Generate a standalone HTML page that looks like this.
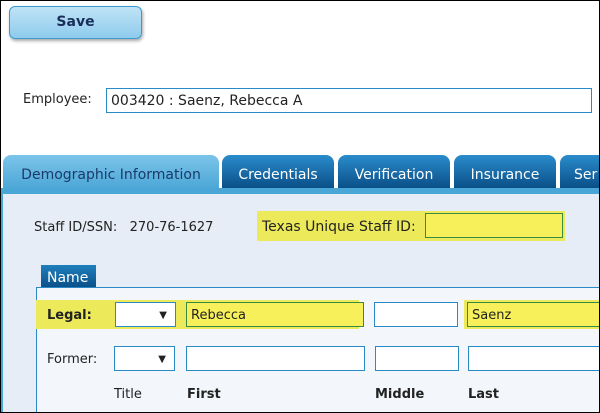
<!DOCTYPE html>
<html><head><style>
*{box-sizing:border-box;margin:0;padding:0}
body{width:600px;height:413px;overflow:hidden;background:#fff;font-family:"DejaVu Sans","Liberation Sans",sans-serif;font-size:13px;color:#222;position:relative}
.frame{position:absolute;left:0;top:0;width:600px;height:413px;border:1px solid #000;pointer-events:none;z-index:10}
.a{position:absolute}
.save{left:9px;top:6px;width:133px;height:33px;border:1px solid #3a9ad0;border-radius:6px;background:linear-gradient(#bfe3f6,#8fcbec);box-shadow:1px 2px 3px rgba(0,0,0,.35);font-weight:bold;color:#1a2e5a;font-size:14px;text-align:center;line-height:31px}
.inp{background:#fff;border:1px solid #2a8ac8}
.y{background:#f7f05a;border:1px solid #3a8a40}
.tab{top:155px;height:33px;border-radius:8px 8px 0 0;background:linear-gradient(#2a8ccc,#0a4f88);color:#fff;font-size:14px;text-align:center;line-height:40px}
.hl{background:#ece95a}
</style></head><body>
<div class="frame"></div>
<div class="a save">Save</div>
<div class="a" style="left:23px;top:92px;font-size:13px">Employee:</div>
<div class="a inp" style="left:106px;top:88px;width:486px;height:25px;padding-left:4px;line-height:25px;font-size:14px">003420 : Saenz, Rebecca A</div>
<div class="a" style="left:1px;top:188px;width:599px;height:6px;background:#4aa6d6"></div>
<div class="a" style="left:1px;top:194px;width:2px;height:219px;background:#4aa6d6"></div>
<div class="a" style="left:3px;top:194px;width:597px;height:219px;background:#e6edf6"></div>
<div class="a tab" style="left:3px;width:216px;height:35px;background:linear-gradient(#7cc4ea,#4aa6d6);color:#1a3a6a">Demographic Information</div>
<div class="a tab" style="left:222px;width:112px">Credentials</div>
<div class="a tab" style="left:338px;width:112px">Verification</div>
<div class="a tab" style="left:454px;width:102px">Insurance</div>
<div class="a tab" style="left:560px;width:60px;text-align:left;padding-left:14px">Ser</div>
<div class="a" style="left:34px;top:220px">Staff ID/SSN:&nbsp;&nbsp; 270-76-1627</div>
<div class="a hl" style="left:257px;top:211px;width:308px;height:30px"></div>
<div class="a" style="left:262px;top:219px;font-size:14px">Texas Unique Staff ID:</div>
<div class="a y" style="left:425px;top:213px;width:138px;height:25px"></div>
<div class="a" style="left:41px;top:265px;width:55px;height:23px;background:linear-gradient(#1e7fbc,#0a4f88);color:#fff;font-size:14px;padding-left:6px;line-height:26px">Name</div>
<div class="a" style="left:36px;top:287px;width:564px;height:126px;background:#f3f6fb;border-left:1px solid #2a8ac8;border-top:1px solid #2a8ac8"></div>
<div class="a hl" style="left:36px;top:300px;width:283px;height:29px"></div>
<div class="a hl" style="left:319px;top:300px;width:40px;height:29px"></div>
<div class="a hl" style="left:464px;top:300px;width:136px;height:29px"></div>
<div class="a" style="left:47px;top:308px;font-weight:bold">Legal:</div>
<div class="a inp" style="left:115px;top:302px;width:61px;height:25px;font-size:10px;text-align:right;padding-right:8px;line-height:25px">▼</div>
<div class="a y" style="left:186px;top:302px;width:178px;height:25px;padding-left:4px;line-height:25px">Rebecca</div>
<div class="a inp" style="left:374px;top:302px;width:84px;height:25px"></div>
<div class="a y" style="left:467px;top:302px;width:140px;height:25px;padding-left:4px;line-height:25px">Saenz</div>
<div class="a" style="left:47px;top:352px">Former:</div>
<div class="a inp" style="left:114px;top:346px;width:61px;height:25px;font-size:10px;text-align:right;padding-right:8px;line-height:25px">▼</div>
<div class="a inp" style="left:186px;top:346px;width:179px;height:25px"></div>
<div class="a inp" style="left:375px;top:346px;width:84px;height:25px"></div>
<div class="a inp" style="left:468px;top:346px;width:140px;height:25px"></div>
<div class="a" style="left:114px;top:387px">Title</div>
<div class="a" style="left:187px;top:387px;font-weight:bold">First</div>
<div class="a" style="left:375px;top:387px;font-weight:bold">Middle</div>
<div class="a" style="left:468px;top:387px;font-weight:bold">Last</div>
</body></html>
